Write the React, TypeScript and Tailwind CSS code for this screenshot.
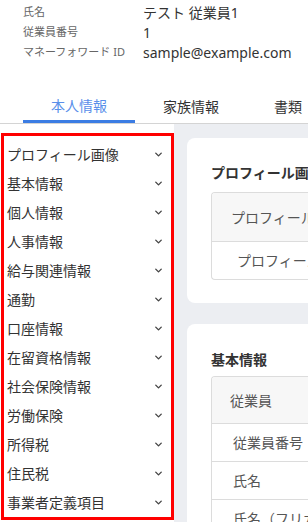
import { ChevronDown } from "lucide-react";

const font = { fontFamily: '"Noto Sans", "Noto Sans CJK JP", sans-serif' };

const profile = [
  { label: "氏名", value: "テスト 従業員1" },
  { label: "従業員番号", value: "1" },
  { label: "マネーフォワード ID", value: "sample@example.com" },
];

const sections = [
  "プロフィール画像",
  "基本情報",
  "個人情報",
  "人事情報",
  "給与関連情報",
  "通勤",
  "口座情報",
  "在留資格情報",
  "社会保険情報",
  "労働保険",
  "所得税",
  "住民税",
  "事業者定義項目",
];

const basicRows = ["従業員番号", "氏名", "氏名（フリガナ）"];

export default function App() {
  return (
    <div className="w-[308px] h-[522px] overflow-hidden bg-white text-[#333]" style={font}>
      {/* header */}
      <div className="pt-[2px] pl-[23px]">
        {profile.map((p) => (
          <div key={p.label} className="flex h-[20px] items-center">
            <div className="w-[120px] text-[11px] text-[#666] whitespace-nowrap">{p.label}</div>
            <div className="text-[14px] text-[#333] whitespace-nowrap">{p.value}</div>
          </div>
        ))}
      </div>

      {/* tabs */}
      <div className="mt-[25px] flex border-b border-[#d4d4d4] pl-[23px] whitespace-nowrap">
        <div className="flex h-[36px] w-[112px] items-center justify-center border-b-[3px] border-[#3b7ce3] pt-[3px] text-[14px] text-[#5a8fea]">
          本人情報
        </div>
        <div className="flex h-[36px] w-[112px] items-center justify-center pt-[3px] text-[14px] text-[#333]">
          家族情報
        </div>
        <div className="flex h-[36px] items-center pl-[27px] pt-[3px] text-[14px] text-[#333]">
          書類
        </div>
      </div>

      <div className="flex">
        {/* sidebar */}
        <div className="w-[174px] shrink-0 bg-white pt-[9px] pl-[1px]">
          <div className="h-[387px] overflow-hidden border-[3px] border-[#ff0000] pt-[4px] pl-[3px] pr-[7px]">
            {sections.map((s) => (
              <div key={s} className="flex h-[29px] items-center justify-between text-[14px] text-[#333]">
                <span className="whitespace-nowrap">{s}</span>
                <ChevronDown className="h-[11px] w-[11px] text-[#444]" strokeWidth={3} />
              </div>
            ))}
          </div>
        </div>

        {/* content */}
        <div className="flex-1 bg-[#eceef2] pt-[14px] pl-[13px]">
          <div className="w-[300px] rounded-l-[8px] bg-white pt-[24px] pb-[23px] pl-[24px]">
            <div className="text-[14px] font-bold text-[#333] whitespace-nowrap">プロフィール画像</div>
            <div className="mt-[9px] overflow-hidden rounded-l-[4px] border border-r-0 border-[#dcdcdc] text-[14px] text-[#555] whitespace-nowrap">
              <div className="flex h-[48px] items-center bg-[#f7f7f7] pl-[19px]">プロフィール画像</div>
              <div className="flex h-[38px] items-center border-t border-[#dcdcdc] pl-[25px]">プロフィール画像</div>
            </div>
          </div>

          <div className="mt-[21px] w-[300px] rounded-l-[8px] bg-white pt-[25px] pl-[24px]">
            <div className="text-[14px] font-bold text-[#333] whitespace-nowrap">基本情報</div>
            <div className="mt-[6px] overflow-hidden rounded-l-[4px] border border-r-0 border-[#dcdcdc] text-[14px] text-[#555] whitespace-nowrap">
              <div className="flex h-[46px] items-center bg-[#f7f7f7] pl-[18px]">従業員</div>
              {basicRows.map((r) => (
                <div key={r} className="flex h-[38px] items-center border-t border-[#dcdcdc] pl-[21px]">
                  {r}
                </div>
              ))}
            </div>
          </div>
        </div>
      </div>
    </div>
  );
}
